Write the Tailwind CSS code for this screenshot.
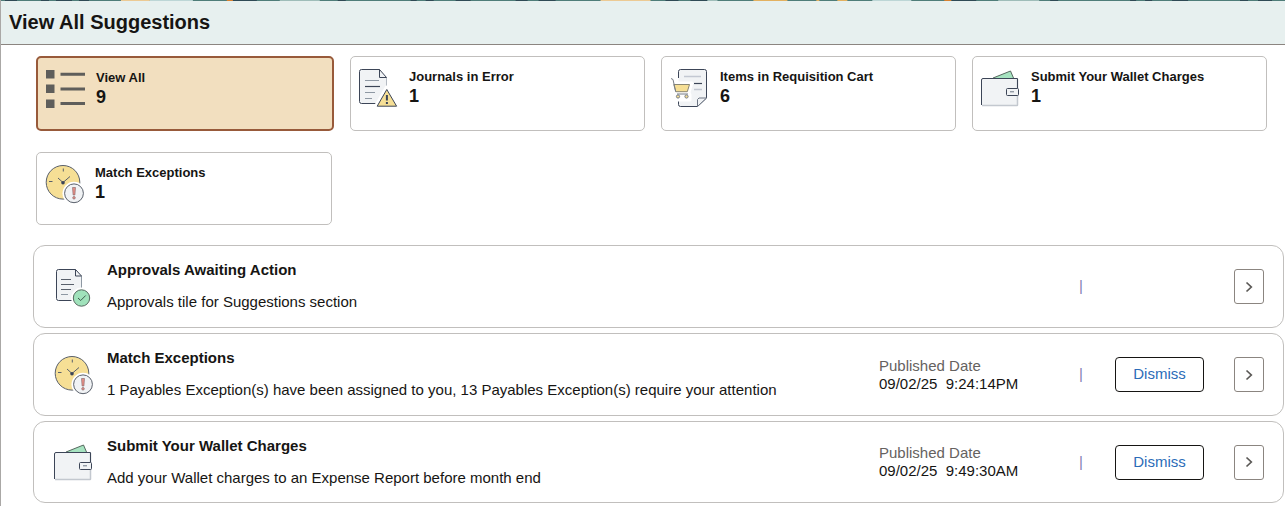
<!DOCTYPE html>
<html lang="en">
<head>
    <meta charset="UTF-8">
    <meta name="viewport" content="width=device-width, initial-scale=1.0">
    <title>View All Suggestions</title>
    <script src="https://cdn.jsdelivr.net/npm/@tailwindcss/browser@4"></script>
</head>
<body class="min-h-screen border-l border-[#aaa8a6] bg-white text-[#161513] font-['Liberation_Sans',Arial,sans-serif]">
    <!-- Shared icons -->
    <svg class="hidden" aria-hidden="true">
        <symbol id="icon-list" viewBox="0 0 40 40">
            <path fill="#5f5e5b" d="M1 1h8.500v8.500H1zM1 15.500h8.500V24H1zM1 30.500h8.500V39H1zM15.500 3.800H41v3H15.500zM15.500 18.400H41v3H15.500zM15.500 33H41v3H15.500z"/>
        </symbol>
        <symbol id="icon-journal" viewBox="0 0 40 40">
            <path d="M21.500 1.500H3.500a2 2 0 0 0-2 2v30a2 2 0 0 0 2 2h25V9.500z" fill="#f1f3f5"/>
            <path d="M28.500 9.500V24" fill="none" stroke="#b4bac2"/>
            <path d="M28.500 9.500l-7-8h-18a2 2 0 0 0-2 2v30a2 2 0 0 0 2 2H18M21.500 1.500v8h7" fill="none" stroke="#3c4557"/>
            <path d="M7 12.500h14M7 24.500h10M7 30.500h7" stroke="#8e98a3"/>
            <path d="M7 18.500h15" stroke="#3c4557" stroke-width="1.200"/>
            <path d="M28.500 19L17 39h23V37z" fill="#fff" stroke="#fff" stroke-width="3" stroke-linejoin="round"/>
            <path d="M28.800 21.500L19.200 38.200h19.400z" fill="#f6df95" stroke="#3c4557" stroke-linejoin="round"/>
            <path d="M28.900 27v5.500M28.900 34v2" stroke="#3c4557" stroke-width="2"/>
        </symbol>
        <symbol id="icon-cart" viewBox="0 0 40 40">
            <path d="M9.500 10V3.500a2 2 0 0 1 2-2h24a2 2 0 0 1 2 2V30l-9 8.500h-17a2 2 0 0 1-2-2V10z" fill="#f1f3f5"/>
            <path d="M9.500 10V3.500a2 2 0 0 1 2-2h24a2 2 0 0 1 2 2V30l-9 8.500h-17a2 2 0 0 1-2-2V33" fill="none" stroke="#3c4557"/>
            <path d="M28.500 38.500v-7l1.500-1.500h7.500z" fill="#f1f3f5" stroke="#6c7583"/>
            <path d="M15 8.500h17M25 21.500h8" stroke="#c3c8d2" stroke-width="1.600"/>
            <path d="M25 15.500h8" stroke="#3c4557" stroke-width="1.200"/>
            <path d="M2 10h4l1 5h16l-3 9 1 3v5H7l1-8z" fill="#fff" stroke="#fff" stroke-width="3" stroke-linejoin="round"/>
            <path d="M4.800 16.500h15.700l-2.200 7.200H6.800z" fill="#f6df95" stroke="#8a8672"/>
            <path d="M2 10.500l2 1 2.700 12.200M8 26h11" fill="none" stroke="#777d86"/>
            <circle cx="9" cy="28.500" r="1.600" fill="#f6df95" stroke="#777d86"/>
            <circle cx="17.500" cy="28.500" r="1.600" fill="#f6df95" stroke="#777d86"/>
        </symbol>
        <symbol id="icon-wallet" viewBox="0 0 40 40">
            <path d="M13 10L30.500 3l3 7" fill="#a6e3c0" stroke="#56685f"/>
            <rect x="1.500" y="10.500" width="36" height="27" rx="1.500" fill="#f1f3f5"/>
            <path d="M2 37.500h35a.5.5 0 0 0 .5-.5V11" fill="none" stroke="#c3c8cf" stroke-width="1.500"/>
            <path d="M1.500 37V12a1.500 1.500 0 0 1 1.500-1.500h34.500V20" fill="none" stroke="#3c4557"/>
            <rect x="26.500" y="20.500" width="12" height="7" rx="1" fill="#f1f3f5" stroke="#3c4557"/>
            <path d="M30 23.800h4" stroke="#6c7583"/>
        </symbol>
        <symbol id="icon-clock" viewBox="0 0 40 40">
            <circle cx="19" cy="18.300" r="16.800" fill="#f6df95" stroke="#59606b"/>
            <path d="M19.300 4.500v3M5 17.500h3.500M26 12.500l-7 6-5-4.500" fill="none" stroke="#59606b"/>
            <circle cx="19" cy="18.700" r="1.800" fill="#3c4557"/>
            <circle cx="30" cy="29.300" r="11.500" fill="#fff"/>
            <circle cx="30" cy="29.300" r="9.400" fill="#f1f3f5" stroke="#59606b"/>
            <path d="M28.500 23.500h3l-.6 7.500h-1.800z" fill="#e88f86" stroke="#7d6468" stroke-width=".6"/>
            <circle cx="30" cy="33.800" r="1.300" fill="#e88f86" stroke="#7d6468" stroke-width=".6"/>
        </symbol>
        <symbol id="icon-approval" viewBox="0 0 40 40">
            <path d="M22.500 2.500h-17a2 2 0 0 0-2 2v27a2 2 0 0 0 2 2h23V9z" fill="#f1f3f5"/>
            <path d="M28.500 9v12" fill="none" stroke="#8e98a3"/>
            <path d="M28.500 9l-6-6.500h-17a2 2 0 0 0-2 2v27a2 2 0 0 0 2 2H20M22.500 2.500V9h6" fill="none" stroke="#3c4557"/>
            <path d="M8 12.500h10M8 17.500h13M8 22.500h10" stroke="#59606b" stroke-width="1.200"/>
            <path d="M8 27.500h7" stroke="#8e98a3"/>
            <circle cx="28.500" cy="31" r="10.500" fill="#fff"/>
            <circle cx="28.500" cy="31" r="8.200" fill="#a0e2bb" stroke="#56685f"/>
            <path d="M25 31l2.700 2.500 5-5" fill="none" stroke="#3f5a4d"/>
        </symbol>
        <symbol id="icon-chevron" viewBox="0 0 8 12">
            <path d="M1.500 1.500L6.300 6l-4.800 4.500" fill="none" stroke="#5a5855" stroke-width="1.700"/>
        </symbol>
    </svg>

    <!-- Banner strip -->
    <svg class="block w-full h-px" viewBox="0 0 1285 1" preserveAspectRatio="none" aria-hidden="true">
        <path fill="#4f7d79" d="M0 0h1285v1H0z"/>
        <path fill="#2f4a55" d="M4 0h12v1H4zM40 0h8v1h-8zM55 0h16v1H55zM78 0h10v1H78zM232 0h24v1h-24zM337 0h8v1h-8zM410 0h6v1h-6zM425 0h8v1h-8zM455 0h15v1h-15zM515 0h12v1h-12zM538 0h17v1h-17zM665 0h13v1h-13zM690 0h17v1h-17zM951 0h25v1h-25zM1050 0h8v1h-8zM1130 0h6v1h-6zM1145 0h7v1h-7zM1172 0h16v1h-16zM1240 0h8v1h-8zM1258 0h14v1h-14z"/>
        <path fill="#ecca94" d="M120 0h29v1h-29zM600 0h50v1h-50z"/>
        <path fill="#bdd6d6" d="M149 0h43v1h-43zM872 0h39v1h-39z"/>
        <path fill="#9fbdb9" d="M279 0h40v1h-40zM707 0h10v1h-10zM998 0h41v1h-41z"/>
        <path fill="#d9812f" d="M226 0h6v1h-6zM944 0h7v1h-7z"/>
        <path fill="#e3b160" d="M753 0h34v1h-34zM816 0h3v1h-3zM837 0h10v1h-10z"/>
    </svg>

    <header class="bg-[#e7f0ef] border-b border-[#8b8580] px-2 pt-2 pb-[9px]">
        <h1 class="text-xl leading-[26px] font-bold">View All Suggestions</h1>
    </header>

    <main>
        <!-- Category filters -->
        <div class="grid grid-cols-[298fr_295fr_295fr_295fr] gap-x-4 gap-y-[21px] pt-[11px] pl-[35px] pr-[18px]">
            <button type="button" aria-pressed="true" class="flex items-start gap-[11px] h-[75px] pl-[7px] pt-[11px] text-left rounded-[5px] border-2 border-[#985a3a] bg-[#f2dfbf]">
                <svg class="w-10 h-10 shrink-0 overflow-visible"><use href="#icon-list"/></svg>
                <span>
                    <span class="block text-[13px] leading-[18px] font-bold">View All</span>
                    <span class="block text-lg leading-5 font-bold">9</span>
                </span>
            </button>
            <button type="button" class="flex items-start gap-[11px] h-[75px] pl-[7px] pt-[11px] text-left rounded-[5px] border border-[#c1bfbd] bg-white">
                <svg class="w-10 h-10 shrink-0"><use href="#icon-journal"/></svg>
                <span>
                    <span class="block text-[13px] leading-[18px] font-bold">Journals in Error</span>
                    <span class="block text-lg leading-5 font-bold">1</span>
                </span>
            </button>
            <button type="button" class="flex items-start gap-[11px] h-[75px] pl-[7px] pt-[11px] text-left rounded-[5px] border border-[#c1bfbd] bg-white">
                <svg class="w-10 h-10 shrink-0"><use href="#icon-cart"/></svg>
                <span>
                    <span class="block text-[13px] leading-[18px] font-bold">Items in Requisition Cart</span>
                    <span class="block text-lg leading-5 font-bold">6</span>
                </span>
            </button>
            <button type="button" class="flex items-start gap-[11px] h-[75px] pl-[7px] pt-[11px] text-left rounded-[5px] border border-[#c1bfbd] bg-white">
                <svg class="w-10 h-10 shrink-0"><use href="#icon-wallet"/></svg>
                <span>
                    <span class="block text-[13px] leading-[18px] font-bold">Submit Your Wallet Charges</span>
                    <span class="block text-lg leading-5 font-bold">1</span>
                </span>
            </button>
            <button type="button" class="flex items-start gap-[11px] h-[73px] mr-0.5 pl-[7px] pt-[11px] text-left rounded-[5px] border border-[#c1bfbd] bg-white">
                <svg class="w-10 h-10 shrink-0"><use href="#icon-clock"/></svg>
                <span>
                    <span class="block text-[13px] leading-[18px] font-bold">Match Exceptions</span>
                    <span class="block text-lg leading-5 font-bold">1</span>
                </span>
            </button>
        </div>

        <!-- Suggestions -->
        <ul class="flex flex-col gap-[5px] mt-5 ml-8 mr-px">
            <li class="flex items-center min-h-[83px] px-[19px] rounded-xl border border-[#c1bfbd]">
                <svg class="w-10 h-10 shrink-0 mr-[14px]"><use href="#icon-approval"/></svg>
                <div class="flex-1 self-start pt-[14px]">
                    <h2 class="text-[15px] leading-5 font-bold">Approvals Awaiting Action</h2>
                    <p class="text-[15px] leading-5 mt-3">Approvals tile for Suggestions section</p>
                </div>
                <span class="w-9 text-[15px] text-[#8480b4]">|</span>
                <span class="w-[89px]"></span>
                <button type="button" aria-label="Open Approvals Awaiting Action" class="flex items-center justify-center w-[30px] h-[35px] ml-[30px] rounded-[3px] border border-[#8b8580]">
                    <svg class="w-2 h-3"><use href="#icon-chevron"/></svg>
                </button>
            </li>
            <li class="flex items-center min-h-[83px] px-[19px] rounded-xl border border-[#c1bfbd]">
                <svg class="w-10 h-10 shrink-0 mr-[14px]"><use href="#icon-clock"/></svg>
                <div class="flex-1 self-start pt-[14px]">
                    <h2 class="text-[15px] leading-5 font-bold">Match Exceptions</h2>
                    <p class="text-[15px] leading-5 mt-3">1 Payables Exception(s) have been assigned to you, 13 Payables Exception(s) require your attention</p>
                </div>
                <div class="w-[200px] text-[15px] leading-[18px]">
                    <div class="text-[#65625f]">Published Date</div>
                    <div>09/02/25&nbsp; 9:24:14PM</div>
                </div>
                <span class="w-9 text-[15px] text-[#8480b4]">|</span>
                <button type="button" class="w-[89px] h-[35px] rounded-[4px] border border-[#161513] text-[15px] text-[#2b6cb8]">Dismiss</button>
                <button type="button" aria-label="Open Match Exceptions" class="flex items-center justify-center w-[30px] h-[35px] ml-[30px] rounded-[3px] border border-[#8b8580]">
                    <svg class="w-2 h-3"><use href="#icon-chevron"/></svg>
                </button>
            </li>
            <li class="flex items-center min-h-[82px] px-[19px] rounded-xl border border-[#c1bfbd]">
                <svg class="w-10 h-10 shrink-0 mr-[14px]"><use href="#icon-wallet"/></svg>
                <div class="flex-1 self-start pt-[14px]">
                    <h2 class="text-[15px] leading-5 font-bold">Submit Your Wallet Charges</h2>
                    <p class="text-[15px] leading-5 mt-3">Add your Wallet charges to an Expense Report before month end</p>
                </div>
                <div class="w-[200px] text-[15px] leading-[18px]">
                    <div class="text-[#65625f]">Published Date</div>
                    <div>09/02/25&nbsp; 9:49:30AM</div>
                </div>
                <span class="w-9 text-[15px] text-[#8480b4]">|</span>
                <button type="button" class="w-[89px] h-[35px] rounded-[4px] border border-[#161513] text-[15px] text-[#2b6cb8]">Dismiss</button>
                <button type="button" aria-label="Open Submit Your Wallet Charges" class="flex items-center justify-center w-[30px] h-[35px] ml-[30px] rounded-[3px] border border-[#8b8580]">
                    <svg class="w-2 h-3"><use href="#icon-chevron"/></svg>
                </button>
            </li>
        </ul>
    </main>
</body>
</html>
